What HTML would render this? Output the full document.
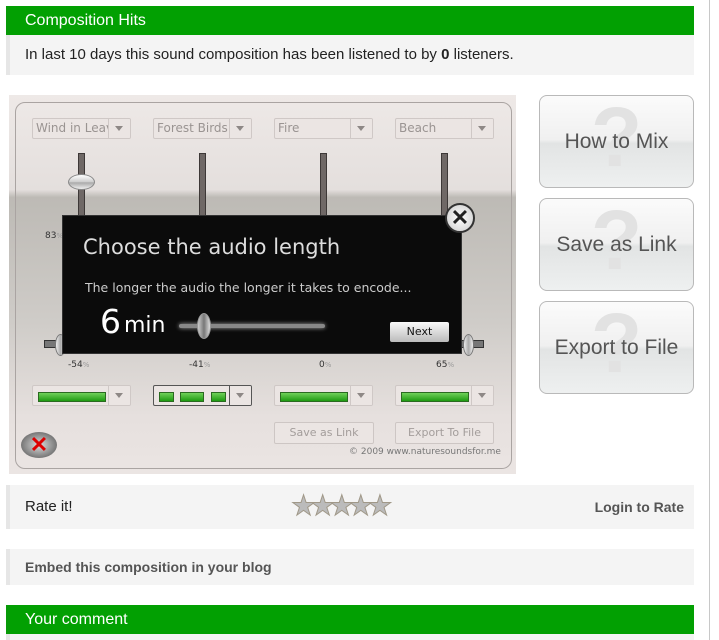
<!DOCTYPE html>
<html><head><style>
body{margin:0;width:719px;height:640px;background:#fff;font-family:"Liberation Sans",sans-serif;position:relative;overflow:hidden}
.a{position:absolute}
.green{background:#02a002;color:#fff;font-size:16px;line-height:29px;padding-left:15px;box-sizing:border-box;border-left:4px solid #079a07}
.gray{background:#f4f4f4;border-left:4px solid #e6e6e6;box-sizing:border-box}
.dd{position:absolute;height:21px;border:1px solid #cfc8c6;border-radius:2px;background:#ebe5e3;box-sizing:border-box;font-family:"DejaVu Sans",sans-serif;font-size:12px;color:#9a9492;line-height:19px;padding-left:3px;overflow:hidden;white-space:nowrap}
.dd i{position:absolute;right:0;top:0;width:21px;height:19px;border-left:1px solid #cfc8c6;background:#ebe5e3}
.dd i:after{content:"";position:absolute;left:6px;top:7px;border:4px solid transparent;border-top:5px solid #8e8886}
.vs{position:absolute;width:5px;background:#6f6866;border:1px solid #3d3837;top:153px;height:182px}
.pct{position:absolute;font-family:"DejaVu Sans",sans-serif;font-size:9px;color:#333}
.pct small{color:#999;font-size:7px}
.gb{position:absolute;left:5px;top:6px;height:8px;background:linear-gradient(#6fd05a,#1e9a12);border:1px solid #2a6a20}
.btn{position:absolute;height:22px;border:1px solid #cdc6c4;background:#ebe5e3;border-radius:2px;box-sizing:border-box;font-family:"DejaVu Sans",sans-serif;font-size:11px;color:#a39d9b;text-align:center;line-height:20px}
.side{position:absolute;left:539px;width:155px;height:93px;border:1px solid #b9b9b9;border-radius:8px;box-sizing:border-box;background:linear-gradient(#fbfbfb 0%,#f0f0f0 48%,#e2e4e4 52%,#eef0f0 100%);font-size:21px;color:#555;text-align:center;line-height:92px;overflow:hidden}
.side b{position:absolute;left:0;right:0;top:-14px;font-size:84px;color:#e2e2e2;font-weight:bold;line-height:110px;z-index:0}
.side span{position:relative;z-index:1}
</style></head><body>
<div class="a" style="left:709px;top:0;width:1px;height:640px;background:#c8c8c8"></div>
<div class="a green" style="left:6px;top:6px;width:688px;height:29px">Composition Hits</div>
<div class="a gray" style="left:6px;top:35px;width:688px;height:40px;font-size:15px;color:#222;line-height:40px;padding-left:15px">In last 10 days this sound composition has been listened to by <b>0</b> listeners.</div>

<div class="a" style="left:9px;top:95px;width:507px;height:379px;background:linear-gradient(#eee9e7 0%,#e4dfdd 25%,#bdbab5 27%,#cfccc8 60%,#e6e0de 85%,#ebe5e3 100%)"></div>
<div class="a" style="left:15px;top:102px;width:495px;height:365px;border:1px solid #aaa4a2;border-radius:10px"></div>
<div class="dd" style="left:32px;top:118px;width:99px">Wind in Leav<i></i></div>
<div class="dd" style="left:153px;top:118px;width:99px">Forest Birds<i></i></div>
<div class="dd" style="left:274px;top:118px;width:99px">Fire<i></i></div>
<div class="dd" style="left:395px;top:118px;width:99px">Beach<i></i></div>
<div class="vs" style="left:78px"></div><div class="vs" style="left:199px"></div><div class="vs" style="left:320px"></div><div class="vs" style="left:441px"></div>
<div class="a" style="left:68px;top:174px;width:25px;height:14px;border-radius:50%;background:linear-gradient(#fff,#ccc 50%,#aaa 55%,#eee);border:1px solid #888"></div>
<div class="pct" style="left:45px;top:231px">83<small>%</small></div>
<div class="a" style="left:44px;top:340px;width:75px;height:6px;background:#777;border:1px solid #333"></div>
<div class="a" style="left:165px;top:340px;width:75px;height:6px;background:#777;border:1px solid #333"></div>
<div class="a" style="left:286px;top:340px;width:75px;height:6px;background:#777;border:1px solid #333"></div>
<div class="a" style="left:407px;top:340px;width:75px;height:6px;background:#777;border:1px solid #333"></div>
<div class="a" style="left:55px;top:334px;width:9px;height:20px;border-radius:50%;background:linear-gradient(90deg,#eee,#aaa,#eee);border:1px solid #777"></div>
<div class="a" style="left:463px;top:334px;width:9px;height:20px;border-radius:50%;background:linear-gradient(90deg,#eee,#aaa,#eee);border:1px solid #777"></div>
<div class="pct" style="left:68px;top:360px">-54<small>%</small></div>
<div class="pct" style="left:189px;top:360px">-41<small>%</small></div>
<div class="pct" style="left:319px;top:360px">0<small>%</small></div>
<div class="pct" style="left:436px;top:360px">65<small>%</small></div>
<div class="dd" style="left:32px;top:385px;width:99px"><span class="gb" style="width:66px"></span><i></i></div>
<div class="dd" style="left:153px;top:385px;width:99px;border-color:#555"><span class="gb" style="width:13px"></span><span class="gb" style="left:26px;width:22px"></span><span class="gb" style="left:57px;width:13px"></span><i style="border-color:#555"></i></div>
<div class="dd" style="left:274px;top:385px;width:99px"><span class="gb" style="width:66px"></span><i></i></div>
<div class="dd" style="left:395px;top:385px;width:99px"><span class="gb" style="width:66px"></span><i></i></div>
<div class="btn" style="left:274px;top:422px;width:100px">Save as Link</div>
<div class="btn" style="left:395px;top:422px;width:99px">Export To File</div>
<div class="a" style="left:349px;top:447px;font-family:'DejaVu Sans',sans-serif;font-size:9px;color:#777">© 2009 www.naturesoundsfor.me</div>
<div class="a" style="left:21px;top:432px;width:36px;height:26px;border-radius:50%;background:radial-gradient(#ddd,#777 70%,#555);color:#d00;font-size:22px;font-weight:bold;text-align:center;line-height:26px">✕</div>

<div class="a" style="left:62px;top:215px;width:400px;height:139px;background:#0b0b0b;border:1px solid #333;box-sizing:border-box;font-family:'DejaVu Sans',sans-serif;color:#ddd">
 <div class="a" style="left:20px;top:19px;font-size:21px">Choose the audio length</div>
 <div class="a" style="left:22px;top:64px;font-size:12.5px;color:#ccc">The longer the audio the longer it takes to encode...</div>
 <div class="a" style="left:37px;top:86px;font-size:33px;color:#fff">6</div>
 <div class="a" style="left:61px;top:97px;font-size:22px;color:#fff">min</div>
 <div class="a" style="left:116px;top:108px;width:146px;height:4px;background:#888;border-radius:2px;box-shadow:0 0 4px #aaa"></div>
 <div class="a" style="left:134px;top:97px;width:12px;height:24px;border-radius:50%;background:linear-gradient(90deg,#ccc,#777,#ddd);border:1px solid #999"></div>
 <div class="a" style="left:327px;top:106px;width:59px;height:20px;background:linear-gradient(#fafafa,#bbb);border-radius:2px;color:#111;font-size:11px;text-align:center;line-height:20px">Next</div>
</div>
<div class="a" style="left:445px;top:203px;width:30px;height:30px;border-radius:50%;background:radial-gradient(#fff,#ccc);border:2px solid #333;box-sizing:border-box;text-align:center;line-height:26px;font-size:22px;font-weight:bold;color:#222">✕</div>

<div class="side" style="top:95px"><b>?</b><span>How to Mix</span></div>
<div class="side" style="top:198px"><b>?</b><span>Save as Link</span></div>
<div class="side" style="top:301px"><b>?</b><span>Export to File</span></div>

<div class="a gray" style="left:6px;top:485px;width:688px;height:44px;font-size:15px;color:#222;line-height:44px;padding-left:15px">Rate it!
 <span style="position:absolute;left:281px;top:-1px;font-size:28px;color:#bbb;letter-spacing:-6px;-webkit-text-stroke:1px #a09888">★★★★★</span>
 <span style="position:absolute;right:10px;top:0;font-weight:bold;color:#555;font-size:14px">Login to Rate</span></div>
<div class="a gray" style="left:6px;top:549px;width:688px;height:36px;font-size:14px;font-weight:bold;color:#555;line-height:36px;padding-left:15px">Embed this composition in your blog</div>
<div class="a green" style="left:6px;top:605px;width:688px;height:29px">Your comment</div>
<div class="a gray" style="left:6px;top:634px;width:688px;height:6px"></div>
</body></html>
